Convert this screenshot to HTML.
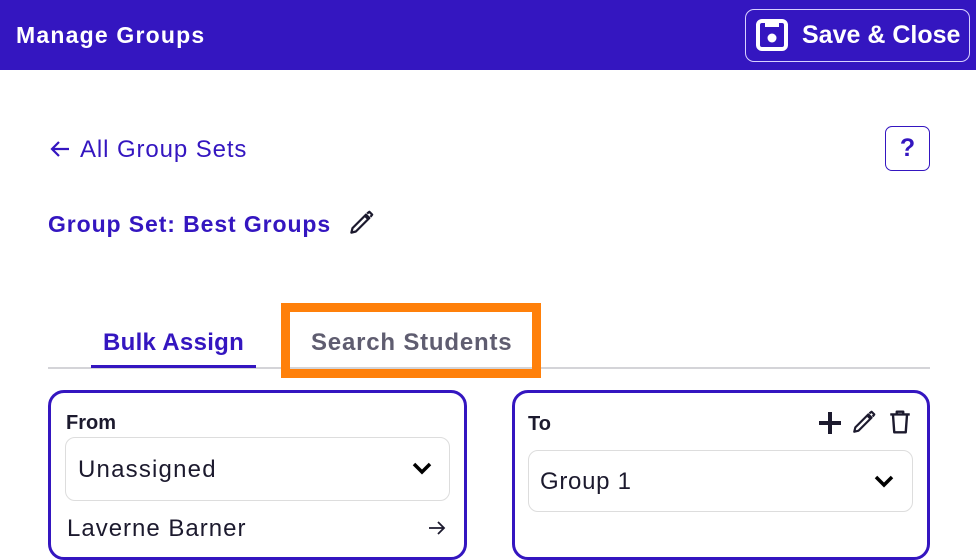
<!DOCTYPE html>
<html><head><style>
*{box-sizing:border-box;margin:0;padding:0}
body{width:976px;height:540px;overflow:hidden;background:#fff;font-family:"Liberation Sans",sans-serif;position:relative;color:#1c1a2e}
.abs{position:absolute}
.hdr{left:0;top:0;width:976px;height:70px;background:#3416c0}
.p{color:#3416c0}
</style></head><body>
<div class="abs hdr"></div>
<div class="abs" style="left:16px;top:22px;color:#fff;font-size:23px;font-weight:bold;letter-spacing:1.2px">Manage Groups</div>
<div class="abs" style="left:745px;top:9px;width:225px;height:53px;border:1.5px solid #d8d0ff;border-radius:9px"></div>
<svg class="abs" style="left:755px;top:18px" width="34" height="34" viewBox="0 0 34 34"><rect x="3" y="3" width="28" height="28" rx="4" fill="none" stroke="#fff" stroke-width="4"/><path d="M10 3v6h14V3" fill="#fff"/><circle cx="17" cy="20" r="4.5" fill="#fff"/></svg>
<div class="abs" style="left:802px;top:21px;color:#fff;font-size:25px;font-weight:bold">Save &amp; Close</div>

<svg class="abs" style="left:48px;top:139px" width="24" height="20" viewBox="0 0 24 20"><path d="M21 10H4M11 3l-7 7 7 7" fill="none" stroke="#3416c0" stroke-width="2.2"/></svg>
<div class="abs p" style="left:80px;top:136px;font-size:24px;letter-spacing:0.9px">All Group Sets</div>
<div class="abs" style="left:885px;top:126px;width:45px;height:45px;border:1.5px solid #3416c0;border-radius:7px;color:#3416c0;font-size:25px;font-weight:bold;text-align:center;line-height:42px">?</div>
<div class="abs p" style="left:48px;top:211px;font-size:23px;font-weight:bold;letter-spacing:0.9px">Group Set: Best Groups</div>
<svg class="abs" style="left:348px;top:209px" width="27" height="27" viewBox="0 0 24 24"><path d="M3 21l1-4L16 5l3 3L7 20z M15 6l3 3 M17 4l2-1.5 2.5 2.5L20 7" fill="none" stroke="#1c1a2e" stroke-width="2" stroke-linejoin="round"/></svg>

<div class="abs" style="left:48px;top:367px;width:882px;height:1.5px;background:#d4d4d8"></div>
<div class="abs p" style="left:103px;top:329px;font-size:24px;font-weight:bold;letter-spacing:0.3px">Bulk Assign</div>
<div class="abs" style="left:91px;top:365px;width:165px;height:3px;background:#3416c0"></div>
<div class="abs" style="left:281px;top:303px;width:260px;height:75px;border:9px solid #ff800a"></div>
<div class="abs" style="left:311px;top:329px;font-size:24px;font-weight:bold;color:#5f5d70;letter-spacing:0.8px">Search Students</div>

<div class="abs" style="left:48px;top:390px;width:419px;height:170px;border:3px solid #3416c0;border-radius:16px"></div>
<div class="abs" style="left:66px;top:412px;font-size:20px;font-weight:bold">From</div>
<div class="abs" style="left:65px;top:437px;width:385px;height:64px;border:1px solid #ddd;border-radius:10px"></div>
<div class="abs" style="left:78px;top:456px;font-size:24px;letter-spacing:1.2px">Unassigned</div>
<svg class="abs" style="left:411px;top:460px" width="22" height="16" viewBox="0 0 22 16"><path d="M3 4l8 8 8-8" fill="none" stroke="#000" stroke-width="3.5"/></svg>
<div class="abs" style="left:67px;top:515px;font-size:24px;letter-spacing:1px">Laverne Barner</div>
<svg class="abs" style="left:427px;top:519px" width="20" height="18" viewBox="0 0 20 18"><path d="M2 9h15M11 3l6 6-6 6" fill="none" stroke="#1c1a2e" stroke-width="1.8"/></svg>

<div class="abs" style="left:512px;top:390px;width:418px;height:170px;border:3px solid #3416c0;border-radius:16px"></div>
<div class="abs" style="left:528px;top:413px;font-size:20px;font-weight:bold">To</div>
<svg class="abs" style="left:817px;top:410px" width="26" height="26" viewBox="0 0 26 26"><path d="M13 2v22M2 13h22" stroke="#1c1a2e" stroke-width="4"/></svg>
<svg class="abs" style="left:851px;top:409px" width="26" height="26" viewBox="0 0 24 24"><path d="M3 21l1-4L16 5l3 3L7 20z M15 6l3 3 M17 4l2-1.5 2.5 2.5L20 7" fill="none" stroke="#1c1a2e" stroke-width="2" stroke-linejoin="round"/></svg>
<svg class="abs" style="left:887px;top:409px" width="26" height="26" viewBox="0 0 24 24"><path d="M3 5h18M9 5V2.5h6V5M5.5 5l1.2 16.5h10.6L18.5 5" fill="none" stroke="#1c1a2e" stroke-width="2.2" stroke-linejoin="round"/></svg>
<div class="abs" style="left:528px;top:450px;width:385px;height:62px;border:1px solid #ddd;border-radius:10px"></div>
<div class="abs" style="left:540px;top:468px;font-size:24px;letter-spacing:0.7px">Group 1</div>
<svg class="abs" style="left:873px;top:473px" width="22" height="16" viewBox="0 0 22 16"><path d="M3 4l8 8 8-8" fill="none" stroke="#000" stroke-width="3.5"/></svg>
</body></html>
